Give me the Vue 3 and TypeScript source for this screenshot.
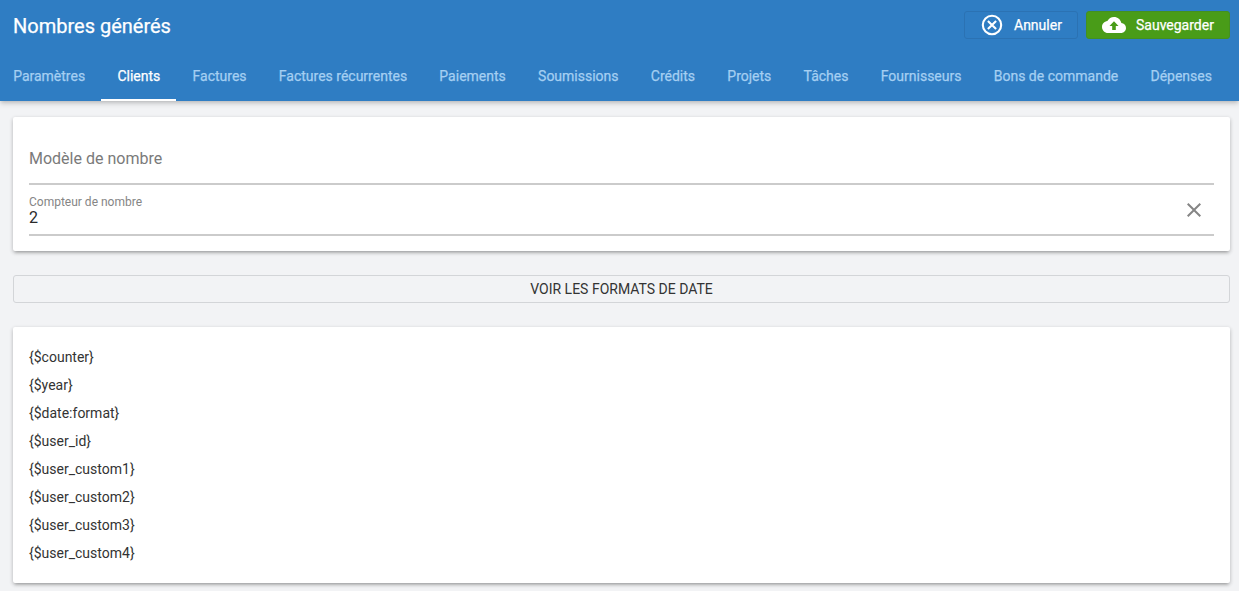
<script setup lang="ts">
import { ref } from 'vue'

const tabs: string[] = [
  'Paramètres',
  'Clients',
  'Factures',
  'Factures récurrentes',
  'Paiements',
  'Soumissions',
  'Crédits',
  'Projets',
  'Tâches',
  'Fournisseurs',
  'Bons de commande',
  'Dépenses',
]
const activeTab = ref('Clients')
const counter = ref('2')

const variables: string[] = [
  '{$counter}',
  '{$year}',
  '{$date:format}',
  '{$user_id}',
  '{$user_custom1}',
  '{$user_custom2}',
  '{$user_custom3}',
  '{$user_custom4}',
]
</script>

<template>
  <div class="page">
    <header class="appbar">
      <div class="toolbar">
        <h1 class="title">Nombres générés</h1>
        <div class="actions">
          <button class="btn cancel" type="button">
            <svg class="icon" viewBox="0 0 24 24" fill="none" stroke="currentColor" stroke-width="2.1">
              <circle cx="12" cy="12" r="9.2" />
              <path d="M7.9 7.9l8.2 8.2M16.1 7.9l-8.2 8.2" />
            </svg>
            <span>Annuler</span>
          </button>
          <button class="btn save" type="button">
            <svg class="icon" viewBox="0 0 24 24" fill="currentColor">
              <path
                d="M19.35 10.04C18.67 6.59 15.64 4 12 4 9.11 4 6.6 5.64 5.35 8.04 2.34 8.36 0 10.91 0 14c0 3.31 2.69 6 6 6h13c2.76 0 5-2.24 5-5 0-2.64-2.05-4.78-4.65-4.96zM13.8 13v4h-3.6v-4H7.5l4.5-4.8 4.5 4.8h-2.7z"
              />
            </svg>
            <span>Sauvegarder</span>
          </button>
        </div>
      </div>
      <nav class="tabs">
        <button
          v-for="tab in tabs"
          :key="tab"
          type="button"
          class="tab"
          :class="{ active: tab === activeTab }"
          @click="activeTab = tab"
        >
          {{ tab }}
        </button>
      </nav>
    </header>

    <main class="content">
      <section class="card form">
        <div class="field pattern">Modèle de nombre</div>
        <div class="field counter">
          <div class="value">
            <span class="label">Compteur de nombre</span>
            <span class="number">{{ counter }}</span>
          </div>
          <button class="clear" type="button" aria-label="Effacer" @click="counter = ''">
            <svg viewBox="0 0 24 24" fill="currentColor">
              <path
                d="M19 6.41L17.59 5 12 10.59 6.41 5 5 6.41 10.59 12 5 17.59 6.41 19 12 13.41 17.59 19 19 17.59 13.41 12z"
              />
            </svg>
          </button>
        </div>
      </section>

      <button class="formats" type="button">VOIR LES FORMATS DE DATE</button>

      <section class="card variables">
        <div v-for="name in variables" :key="name" class="variable">{{ name }}</div>
      </section>
    </main>
  </div>
</template>

<style>
body {
  overflow: hidden;
  background: #f2f3f5;
}
</style>

<style scoped>
.page {
  height: 591px;
  box-sizing: border-box;
  overflow: hidden;
  background: #f2f3f5;
  color: #333;
  font-family: Roboto, sans-serif;
  font-size: 14px;
}
button {
  margin: 0;
  padding: 0;
  border: 0;
  background: none;
  color: inherit;
  font: inherit;
  white-space: nowrap;
}
svg {
  display: block;
}
.appbar {
  position: relative;
  height: 101px;
  background: #2f7dc3;
  color: #fff;
  -webkit-text-stroke: 0.25px currentColor;
  box-shadow: 0 2px 4px -1px rgba(0, 0, 0, 0.2), 0 4px 5px rgba(0, 0, 0, 0.08);
}
.toolbar {
  display: flex;
  justify-content: space-between;
  height: 53px;
  padding: 0 9px 0 13px;
}
.title {
  margin: 0;
  font-size: 20px;
  font-weight: 400;
  line-height: 52px;
}
.actions {
  display: flex;
  gap: 8px;
  padding-top: 11px;
}
.btn {
  display: flex;
  align-items: center;
  gap: 10px;
  height: 28px;
  box-sizing: border-box;
  padding: 0 15px;
  border-radius: 3px;
  border: 1px solid #2b72b3;
}
.cancel {
  width: 114px;
}
.save {
  width: 144px;
  border-color: #43911f;
  background: #499c18;
}
.icon {
  width: 24px;
  height: 24px;
}
.tabs {
  display: flex;
  height: 48px;
  padding-right: 11px;
  margin-left: -3px;
}
.tab {
  height: 48px;
  padding: 0 16.14px;
  border-bottom: 2px solid transparent;
  box-sizing: border-box;
  color: #a5cff2;
}
.tab.active {
  border-color: #fff;
  color: #fff;
}
.content {
  padding: 16px 9px 0 13px;
}
.card {
  box-sizing: border-box;
  border-radius: 2px;
  background: #fff;
  box-shadow: 0 3px 3px -2px rgba(0, 0, 0, 0.2), 0 2px 4px rgba(0, 0, 0, 0.14), 0 1px 4px rgba(0, 0, 0, 0.12);
}
.form {
  height: 134px;
  padding: 16px 16px 0;
}
.field {
  box-sizing: border-box;
  border-bottom: 2px solid #cbcbcb;
}
.pattern {
  height: 52px;
  font-size: 16px;
  line-height: 51px;
  color: #7a7a7a;
}
.counter {
  display: flex;
  justify-content: space-between;
  height: 51px;
  padding: 10px 12px 0 0;
}
.value {
  display: flex;
  flex-direction: column;
}
.label {
  font-size: 12px;
  line-height: 14px;
  color: #858585;
}
.number {
  font-size: 16px;
  line-height: 18px;
  color: #2a2a2a;
}
.clear {
  align-self: flex-start;
  margin-top: 3px;
  width: 16px;
  height: 24px;
  color: #858585;
}
.clear svg {
  width: 24px;
  height: 24px;
  margin: 0 -4px;
}
.formats {
  display: block;
  width: 100%;
  height: 28px;
  margin: 24px 0;
  border: 1px solid #d3d5d8;
  border-radius: 3px;
  text-align: center;
}
.variables {
  height: 256px;
  padding: 16px;
}
.variable {
  height: 28px;
  line-height: 28px;
}
</style>
